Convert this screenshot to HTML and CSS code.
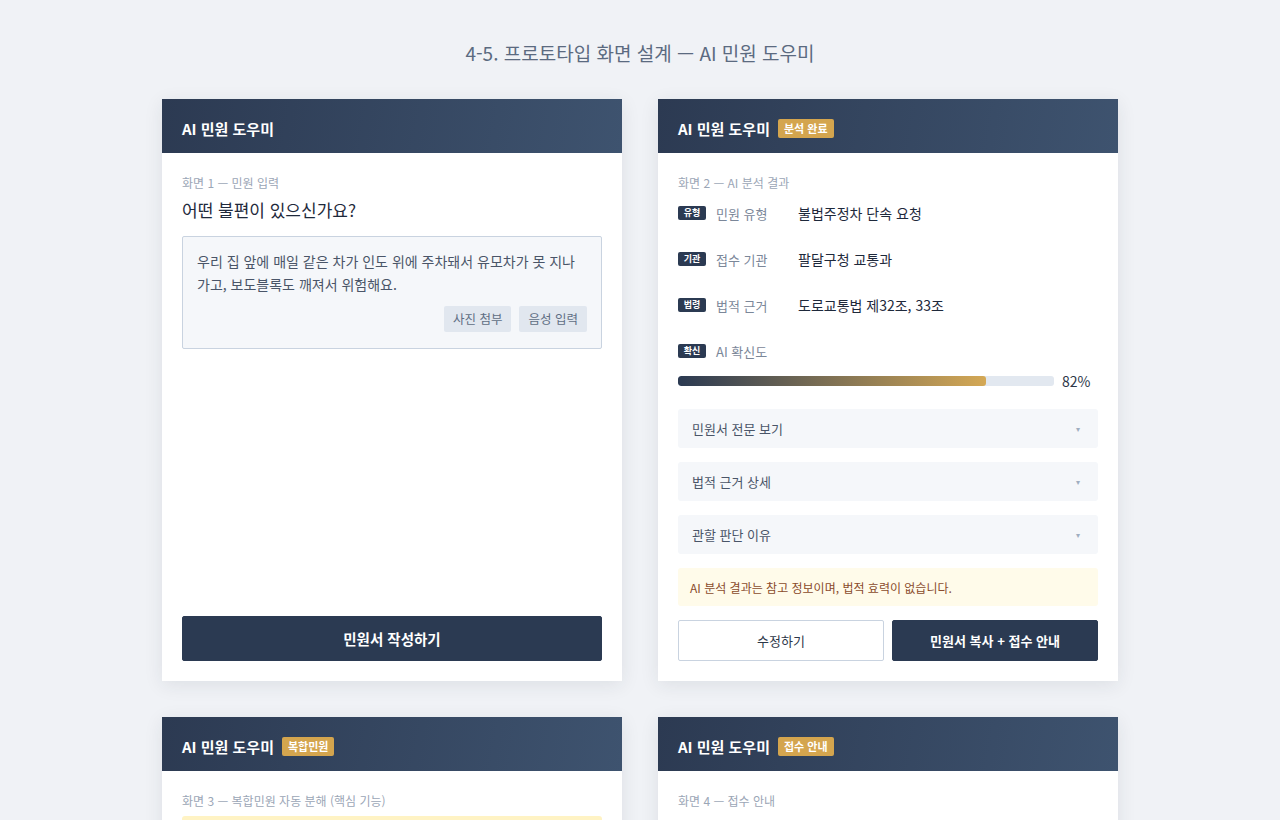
FILE: index.html
```html
<!DOCTYPE html>
<html lang="ko">
<head>
<meta charset="utf-8">
<title>AI 민원 도우미 — 프로토타입</title>
<link rel="stylesheet" href="styles.css">
</head>
<body>
<h1 class="page-title">4-5. 프로토타입 화면 설계 — AI 민원 도우미</h1>
<div class="grid">
  <section class="card">
    <header class="card-head"><span class="app-name">AI 민원 도우미</span></header>
    <div class="card-body">
      <div class="screen-label">화면 1 — 민원 입력</div>
      <div class="question">어떤 불편이 있으신가요?</div>
      <div class="input-box">
        <p class="input-text">우리 집 앞에 매일 같은 차가 인도 위에 주차돼서 유모차가 못 지나가고, 보도블록도 깨져서 위험해요.</p>
        <div class="input-actions">
          <span class="chip">사진 첨부</span>
          <span class="chip">음성 입력</span>
        </div>
      </div>
      <button class="btn btn-primary btn-bottom btn-large">민원서 작성하기</button>
    </div>
  </section>

  <section class="card">
    <header class="card-head"><span class="app-name">AI 민원 도우미</span><span class="badge">분석 완료</span></header>
    <div class="card-body">
      <div class="screen-label">화면 2 — AI 분석 결과</div>
      <div class="rows">
        <div class="row"><span class="tag">유형</span><span class="row-label">민원 유형</span><span class="row-value">불법주정차 단속 요청</span></div>
        <div class="row"><span class="tag">기관</span><span class="row-label">접수 기관</span><span class="row-value">팔달구청 교통과</span></div>
        <div class="row"><span class="tag">법령</span><span class="row-label">법적 근거</span><span class="row-value">도로교통법 제32조, 33조</span></div>
        <div class="row"><span class="tag">확신</span><span class="row-label">AI 확신도</span></div>
      </div>
      <div class="progress-row">
        <div class="progress"><div class="progress-fill" style="width:82%"></div></div>
        <span class="progress-val">82%</span>
      </div>
      <div class="accordions">
        <div class="acc"><span>민원서 전문 보기</span><span class="caret">▾</span></div>
        <div class="acc"><span>법적 근거 상세</span><span class="caret">▾</span></div>
        <div class="acc"><span>관할 판단 이유</span><span class="caret">▾</span></div>
      </div>
      <div class="notice">AI 분석 결과는 참고 정보이며, 법적 효력이 없습니다.</div>
      <div class="btn-pair">
        <button class="btn btn-outline">수정하기</button>
        <button class="btn btn-primary">민원서 복사 + 접수 안내</button>
      </div>
    </div>
  </section>

  <section class="card">
    <header class="card-head"><span class="app-name">AI 민원 도우미</span><span class="badge">복합민원</span></header>
    <div class="card-body">
      <div class="screen-label">화면 3 — 복합민원 자동 분해 (핵심 기능)</div>
      <div class="alert-box">입력하신 내용에서 2건의 민원이 감지되었습니다.</div>
      <div class="filler"></div>
    </div>
  </section>

  <section class="card">
    <header class="card-head"><span class="app-name">AI 민원 도우미</span><span class="badge">접수 안내</span></header>
    <div class="card-body">
      <div class="screen-label">화면 4 — 접수 안내</div>
      <div class="filler"></div>
    </div>
  </section>
</div>
</body>
</html>
```
FILE: styles.css
```css
* { box-sizing: border-box; }

html, body {
  margin: 0;
  padding: 0;
}

body {
  background: #f0f2f6;
  font-family: "Noto Sans CJK KR", "Noto Sans", sans-serif;
  color: #1e293b;
  padding: 40px 0 40px;
}

.page-title {
  margin: 0 0 33px;
  text-align: center;
  font-size: 19px;
  line-height: 26px;
  font-weight: 400;
  color: #5b6a80;
}

.grid {
  display: grid;
  grid-template-columns: 460px 460px;
  column-gap: 36px;
  row-gap: 36px;
  justify-content: center;
}

.card {
  background: #ffffff;
  box-shadow: 0 4px 18px rgba(30, 41, 59, 0.09);
  display: flex;
  flex-direction: column;
}

.card-head {
  height: 54px;
  padding: 5px 20px 0;
  display: flex;
  align-items: center;
  gap: 8px;
  background: linear-gradient(100deg, #2c3a52 0%, #3e536f 100%);
}

.app-name {
  color: #ffffff;
  font-size: 15px;
  font-weight: 700;
  line-height: 20px;
}

.badge {
  background: #d4a54e;
  color: #ffffff;
  font-size: 11px;
  font-weight: 700;
  line-height: 19px;
  height: 19px;
  padding: 0 6px;
  border-radius: 2px;
}

.card-body {
  flex: 1;
  padding: 21px 20px 20px;
  display: flex;
  flex-direction: column;
}

.screen-label {
  font-size: 12px;
  line-height: 18px;
  color: #9ba6b6;
}

.question {
  margin-top: 6px;
  font-size: 17px;
  line-height: 24px;
  color: #1e293b;
}

.input-box {
  margin-top: 14px;
  background: #f5f7fa;
  border: 1px solid #c9d3e0;
  border-radius: 2px;
  padding: 13px 14px 16px;
}

.input-text {
  margin: 0;
  font-size: 14px;
  line-height: 23px;
  color: #4a5568;
}

.input-actions {
  margin-top: 10px;
  display: flex;
  justify-content: flex-end;
  gap: 8px;
}

.chip {
  background: #e1e7ef;
  color: #5f6e84;
  font-size: 12.5px;
  line-height: 26px;
  height: 26px;
  padding: 0 9px;
  border-radius: 2px;
}

.btn {
  font-family: inherit;
  border-radius: 2px;
  cursor: pointer;
  font-size: 13px;
}

.btn-primary {
  background: #2b3a52;
  color: #ffffff;
  border: 1px solid #2b3a52;
  font-weight: 700;
}

.btn-outline {
  background: #ffffff;
  color: #2d3748;
  border: 1px solid #c9d3e0;
}

.btn-bottom {
  margin-top: auto;
}

.btn-large {
  height: 45px;
  font-size: 14.5px;
  width: 100%;
}

.rows {
  margin-top: 10px;
  display: flex;
  flex-direction: column;
  gap: 24px;
}

.row {
  display: flex;
  align-items: center;
  height: 22px;
}

.tag {
  background: #2b3a52;
  color: #ffffff;
  font-size: 9px;
  font-weight: 700;
  line-height: 14px;
  height: 14px;
  width: 28px;
  text-align: center;
  border-radius: 2px;
  margin-right: 10px;
}

.row-label {
  width: 82px;
  font-size: 13px;
  color: #7b8799;
}

.row-value {
  font-size: 14px;
  color: #1e293b;
}

.progress-row {
  margin-top: 9px;
  display: flex;
  align-items: center;
  gap: 8px;
  height: 20px;
}

.progress {
  flex: 1;
  height: 10px;
  background: #e2e8f0;
  border-radius: 3px;
  overflow: hidden;
}

.progress-fill {
  height: 100%;
  background: linear-gradient(90deg, #2b3a52 0%, #d4a855 100%);
  border-radius: 3px;
}

.progress-val {
  width: 36px;
  font-size: 14px;
  color: #2d3748;
  text-align: left;
}

.accordions {
  margin-top: 18px;
  display: flex;
  flex-direction: column;
  gap: 14px;
}

.acc {
  height: 39px;
  background: #f5f7fa;
  border-radius: 3px;
  padding: 0 14px;
  display: flex;
  align-items: center;
  justify-content: space-between;
  font-size: 13px;
  color: #4a5568;
}

.caret {
  font-size: 8px;
  color: #a0aec0;
  margin-right: 4px;
}

.notice {
  margin-top: 14px;
  height: 38px;
  background: #fffbea;
  border-radius: 3px;
  padding: 0 12px;
  display: flex;
  align-items: center;
  font-size: 12px;
  color: #8a4b2c;
}

.btn-pair {
  margin-top: 14px;
  display: flex;
  gap: 8px;
}

.btn-pair .btn {
  flex: 1;
  height: 41px;
}

.alert-box {
  margin-top: 6px;
  background: #fff3c4;
  border-radius: 3px;
  padding: 10px 12px;
  font-size: 13px;
  color: #7a5a1c;
}

.filler {
  height: 300px;
}
```
